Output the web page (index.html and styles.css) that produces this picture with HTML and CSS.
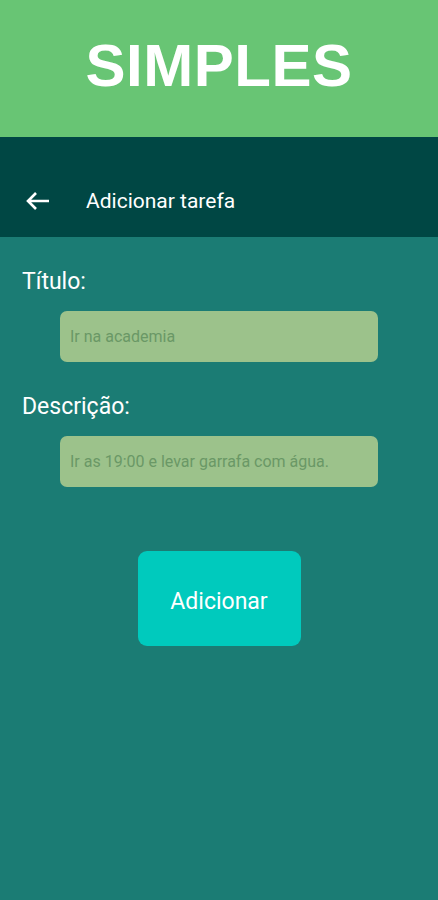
FILE: index.html
```html
<!DOCTYPE html>
<html lang="pt">
<head>
<meta charset="utf-8">
<link rel="stylesheet" href="styles.css">
</head>
<body>
<div class="app">
  <header class="brand"><h1>SIMPLES</h1></header>
  <div class="toolbar">
    <svg class="back" width="26" height="20" viewBox="0 0 26 20"><path d="M24 10H3M11 2L3 10l8 8" fill="none" stroke="#fff" stroke-width="2.6" stroke-linecap="butt" stroke-linejoin="miter"/></svg>
    <span class="title">Adicionar tarefa</span>
  </div>
  <main class="form">
    <label class="label">Título:</label>
    <div class="field">Ir na academia</div>
    <label class="label desc">Descrição:</label>
    <div class="field">Ir as 19:00 e levar garrafa com água.</div>
    <div class="actions"><button class="btn">Adicionar</button></div>
  </main>
</div>
</body>
</html>
```
FILE: styles.css
```css
* { box-sizing: border-box; }
html, body { margin: 0; padding: 0; }
body { width: 438px; height: 900px; background: #1b7c74; font-family: Roboto, "Noto Sans", sans-serif; overflow: hidden; }
.app { display: flex; flex-direction: column; height: 900px; }
.brand { height: 137px; background: #68c574; display: flex; align-items: center; justify-content: center; }
.brand h1 { margin: 0; font-family: "Liberation Sans", Arial, sans-serif; font-weight: 700; font-size: 60px; color: #fff; letter-spacing: 0.5px; position: relative; top: -3px; }
.toolbar { height: 100px; background: #004744; display: flex; align-items: center; padding: 27px 0 0 25px; }
.back { display: block; }
.title { color: #fff; font-size: 21px; margin-left: 35px; }
.form { display: flex; flex-direction: column; padding: 32px 0 0 22px; }
.label { color: #fff; font-size: 23px; line-height: 26px; }
.desc { margin-top: 32px; }
.field { margin: 16px 0 0 38px; width: 318px; height: 51px; border-radius: 7px; background: #9cc28b; color: #6a9866; font-size: 16px; display: flex; align-items: center; padding-left: 10px; }
.actions { display: flex; justify-content: center; margin: 64px 22px 0 0; }
.btn { width: 163px; height: 95px; border: none; border-radius: 9px; background: #00cabd; color: #fff; font-family: Roboto, "Noto Sans", sans-serif; font-size: 23px; padding: 5px 0 0; }
```
